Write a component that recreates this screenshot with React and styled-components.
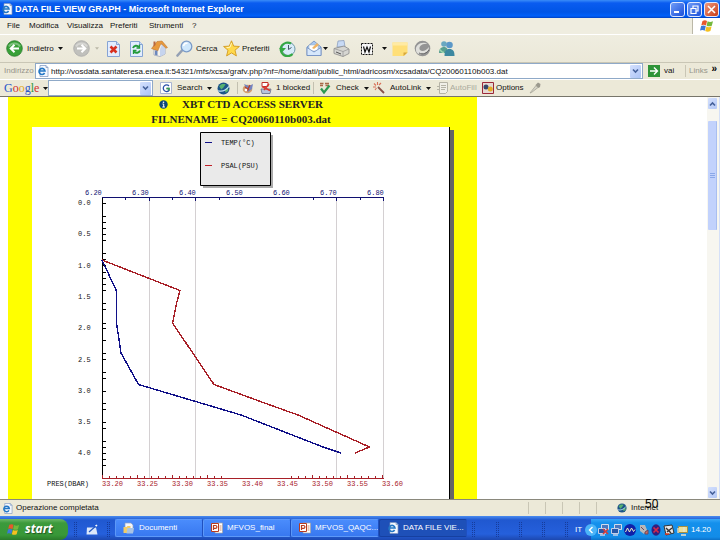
import React from "react";
import styled, { createGlobalStyle } from "styled-components";

const GlobalStyle = createGlobalStyle`
  * { box-sizing: border-box; }
  body { margin: 0; background: #fff; }
  button, input { font: inherit; color: inherit; }
  svg { display: block; flex: none; }
`;

const Page = styled.div`
  display: flex;
  flex-direction: column;
  height: 100vh;
  overflow: hidden;
  font: 8px/12px "Liberation Sans", Arial, sans-serif;
  color: #111;
  white-space: nowrap;
`;

const TitleBar = styled.header`
  flex: none;
  display: flex;
  align-items: center;
  gap: 2px;
  height: 18px;
  padding: 0 1px;
  background: linear-gradient(#3a8cf8 0, #0a5cf0 3px, #0055e6 12px, #0060fa 16px, #0040c0 18px);
`;

const Title = styled.h1`
  flex: 1;
  margin: 0;
  font: 700 9px/16px "Liberation Sans", sans-serif;
  color: #fff;
`;

const WindowButton = styled.button`
  display: grid;
  place-items: center;
  width: 15px;
  height: 15px;
  padding: 0;
  border: 1px solid #dfe8ff;
  border-radius: 3px;
  background: ${(p) => (p.$close ? "linear-gradient(135deg, #f0987c, #c83c18)" : "linear-gradient(135deg, #6f9cf8, #1c50d8)")};
`;

const MenuBar = styled.nav`
  flex: none;
  display: grid;
  grid-template-columns: 22px 38px 43px 39px 43px 1fr 28px;
  align-items: center;
  height: 17px;
  padding-left: 7px;
  background: #efede0;
  border-bottom: 1px solid #fff;
`;

const PlainButton = styled.button`
  display: flex;
  align-items: center;
  gap: ${(p) => p.$gap ?? 3}px;
  min-width: 0;
  height: 16px;
  padding: 0;
  border: 0;
  background: none;
  text-align: left;
  white-space: nowrap;
  color: ${(p) => (p.$dim ? "#aaa99c" : "#111")};
`;

const FlagCell = styled.div`
  display: grid;
  place-items: center;
  height: 16px;
  border-left: 1px solid #bbb8a8;
  background: #fff;
`;

const ToolBar = styled.div`
  flex: none;
  display: grid;
  grid-template-columns: 67px 34px 23px 21px 25px 47px 56px 27px 27px 28px 31px 22px 24px 1fr;
  align-items: center;
  height: 28px;
  padding-left: 6px;
  background: linear-gradient(#efede0, #ebe8d8);
  border-bottom: 1px solid #c9c6b5;
`;

const AddressBar = styled.form`
  flex: none;
  display: flex;
  align-items: center;
  height: 17px;
  padding-left: 4px;
  background: #ece9d8;
  border-bottom: 1px solid #fff;
`;

const AddressLabel = styled.label`
  width: 31px;
  color: #96948a;
`;

const Combo = styled.div`
  flex: ${(p) => (p.$width ? `0 0 ${p.$width}px` : "1")};
  display: flex;
  align-items: center;
  gap: 2px;
  width: ${(p) => (p.$width ? `${p.$width}px` : "auto")};
  height: 16px;
  padding: 0 1px;
  border: 1px solid #8fa9c8;
  background: #fff;
`;

const ComboInput = styled.input`
  flex: 1;
  min-width: 0;
  height: 14px;
  padding: 0;
  border: 0;
  outline: 0;
  background: none;
`;

const ComboButton = styled.button`
  display: grid;
  place-items: center;
  width: 11px;
  height: 13px;
  padding: 0;
  border: 0;
  border-radius: 1px;
  background: linear-gradient(135deg, #d4e0fd, #acc4f6);
`;

const GoArea = styled.div`
  display: flex;
  align-items: center;
  width: 42px;
  padding-left: 5px;
`;

const LinksArea = styled.div`
  display: flex;
  justify-content: space-between;
  width: 35px;
  padding: 0 3px;
  border-left: 1px solid #c9c6b5;
  color: #96948a;
`;

const Chevrons = styled.span`
  color: #000;
  font-weight: 700;
  font-size: 10px;
  line-height: 8px;
`;

const GoogleBar = styled.div`
  flex: none;
  display: grid;
  grid-template-columns: 44px 112px 57px 25px 18px 53px 6px 54px 64px 45px 47px 1fr;
  align-items: center;
  height: 17px;
  padding-left: 4px;
  background: #ece9d8;
  border-bottom: 1px solid #77756a;
`;

const GoogleLogo = styled.span`
  font: 12px/14px "Liberation Serif", serif;
`;

const Letter = styled.span`
  color: ${(p) => p.$color};
`;

const Divider = styled.span`
  width: 1px;
  height: 12px;
  background: #c3c0b0;
`;

const Viewport = styled.main`
  flex: 1;
  min-height: 0;
  display: flex;
  overflow: hidden;
  padding-left: 8px;
  background: #fff;
  border-bottom: 1px solid #8a887c;
`;

const Document = styled.article`
  flex: 0 0 469px;
  display: flex;
  flex-direction: column;
  padding: 0 27px 0 24px;
  overflow: hidden;
  background: #ff0;
`;

const Heading = styled.h2`
  display: flex;
  align-items: center;
  justify-content: center;
  gap: 14px;
  margin: 0;
  font: 700 11px/15px "Liberation Serif", serif;
  color: #222;
`;

const Sheet = styled.section`
  flex: 1;
  min-height: 0;
  border-right: 1px solid #000;
  background: #fff;
  box-shadow: 4px 3px 0 #666;
`;

const ChartText = styled.text`
  font: 7px "Liberation Mono", monospace;
  fill: ${(p) => p.$color ?? "#111"};
`;

const Blank = styled.div`
  flex: 1;
`;

const ScrollTrack = styled.div`
  display: flex;
  flex-direction: column;
  width: 13px;
  padding: 1px 2px 1px 1px;
  background: #f7f6f0;
  border-right: 1px solid #d5e0f8;
`;

const ScrollButton = styled.button`
  display: grid;
  place-items: center;
  height: 11px;
  padding: 0;
  border: 0;
  border-radius: 1px;
  background: linear-gradient(135deg, #d4e0fd, #b4c8f6);
`;

const ScrollThumb = styled.div`
  display: grid;
  place-items: center;
  height: 109px;
  margin-top: 12px;
  border-radius: 1px;
  background: #c2d2fc;
  border-right: 1px solid #a8bef0;
`;

const ScrollGap = styled.div`
  flex: 1;
`;

const StatusBar = styled.footer`
  flex: none;
  display: flex;
  align-items: center;
  height: 16px;
  padding-left: 2px;
  gap: 3px;
  background: #ece9d8;
`;

const StatusText = styled.span`
  flex: 1;
`;

const StatusCell = styled.span`
  width: 14px;
  height: 12px;
  border-left: 1px solid #c9c6b5;
`;

const Zone = styled.span`
  position: relative;
  display: flex;
  align-items: center;
  gap: 4px;
  width: 107px;
  padding-left: 4px;
`;

const SlideNumber = styled.span`
  position: absolute;
  left: 32px;
  top: -4px;
  font: 12px/12px "Liberation Sans", sans-serif;
  color: #000;
`;

const TaskBar = styled.nav`
  flex: none;
  display: flex;
  align-items: stretch;
  height: 24px;
  padding-top: 3px;
  color: #fff;
  background: linear-gradient(#4a8cf0 0, #2058d0 4px, #2560dc 18px, #1c48b0 24px);
`;

const StartButton = styled.button`
  display: flex;
  align-items: center;
  gap: 5px;
  width: 68px;
  padding: 0 0 1px 7px;
  border: 0;
  border-radius: 0 8px 8px 0;
  background: linear-gradient(#6cb868 0, #3c9a3c 4px, #389838 16px, #2a7a2a 21px);
  font: italic 700 12px/18px "Open Sans", sans-serif;
  color: #fff;
  text-shadow: 1px 1px 1px #225522;
`;

const QuickLaunch = styled.div`
  display: flex;
  align-items: center;
  justify-content: space-between;
  width: 47px;
  padding: 0 5px 0 6px;
`;

const Grip = styled.span`
  width: 3px;
  height: 15px;
  border-left: 1px dotted #163c9c;
  border-right: 1px dotted #163c9c;
`;

const TaskButton = styled.button`
  flex: 0 1 88px;
  display: flex;
  align-items: center;
  gap: 4px;
  min-width: 0;
  height: 18px;
  padding: 0 0 0 7px;
  border: 1px solid ${(p) => (p.$active ? "#1640a0" : "#5c98f8")};
  border-right-color: #1f50c0;
  border-radius: 2px;
  background: ${(p) => (p.$active ? "#1e50b8" : "linear-gradient(#4a8cfc, #3878f0)")};
  color: #fff;
  overflow: hidden;
  white-space: nowrap;
`;

const GripArea = styled.div`
  flex: 1;
  display: flex;
  align-items: center;
  justify-content: flex-end;
  gap: 20px;
  padding-right: 7px;
`;

const FirstGrip = styled(Grip)`
  margin-right: auto;
  margin-left: 5px;
`;

const Language = styled.span`
  align-self: center;
  width: 10px;
`;

const CollapseButton = styled.button`
  align-self: center;
  display: grid;
  place-items: center;
  width: 12px;
  height: 12px;
  margin-right: -6px;
  padding: 0;
  border: 0;
  border-radius: 50%;
  background: #4cb4f8;
  z-index: 1;
`;

const Tray = styled.div`
  display: flex;
  align-items: center;
  gap: 2px;
  width: 129px;
  padding: 0 9px 0 7px;
  background: linear-gradient(#38a8f8, #1490ec 4px, #128ce8 18px, #0c70c8);
`;

const Clock = styled.time`
  margin-left: auto;
`;

const Caret = () => (
  <svg width="5" height="3" viewBox="0 0 5 3"><path d="M0 0h5L2.500 3z" fill="#111" /></svg>
);

const DownMark = ({ up }) => (
  <svg width="7" height="6" viewBox="0 0 7 6">
    <path d={up ? "M1 4.500 3.500 2 6 4.500" : "M1 1.500 3.500 4 6 1.500"} fill="none" stroke="#45619a" strokeWidth="1.600" />
  </svg>
);

const IePage = ({ size = 12 }) => (
  <svg width={size} height={size} viewBox="0 0 12 12">
    <path d="M3 .5h6l2 2v9H3z" fill="#f4f8ff" stroke="#7b94bd" strokeWidth=".7" />
    <path d="M9 .5v2h2" fill="none" stroke="#7b94bd" strokeWidth=".7" />
    <path d="M7.600 8a3 3 0 1 1 .4-2H2.500" fill="none" stroke="#2377c5" strokeWidth="1.600" />
  </svg>
);

const Flag = ({ size = 14 }) => (
  <svg width={size} height={size} viewBox="0 0 14 14">
    <path d="M2.500 2c2-1 3.200-.8 4.500 0L6 6.500C4.500 5.600 3 5.600 1.300 6.300z" fill="#e8582c" />
    <path d="M7.600 2.200c1.700 1 3.200.9 5.400 0l-1.200 4.500c-2 .9-3.600.8-5.200 0z" fill="#74b83c" />
    <path d="M1.100 7c1.900-.8 3.200-.7 4.700.2L4.700 11.800C3.200 10.900 1.800 10.900 0 11.600z" fill="#3c78d8" />
    <path d="M6.400 7.500c1.700.9 3.200.9 5.200 0l-1.200 4.500c-2 1-3.500.9-5.200 0z" fill="#f4c020" />
  </svg>
);

const RoundArrow = ({ forward }) => (
  <svg width="17" height="17" viewBox="0 0 17 17">
    <circle cx="8.500" cy="8.500" r="7.800" fill={forward ? "#c0c0bc" : "#38a038"} stroke={forward ? "#aaa" : "#2a7c2c"} strokeWidth=".8" />
    <path d="M3 6.500a6 5 0 0 1 11 0" fill="none" stroke="#fff" strokeOpacity=".35" strokeWidth="2" />
    <path d={forward ? "M4 8.500h8M8.500 4.800l3.800 3.700-3.800 3.700" : "M13 8.500H5M8.500 4.800 4.700 8.500l3.800 3.700"} fill="none" stroke="#fff" strokeWidth="2" />
  </svg>
);

const PageIcon = ({ refresh }) => (
  <svg width="13" height="16" viewBox="0 0 13 16">
    <path d="M.5.500h9l3 3v12H.5z" fill="#e2edff" stroke="#86a4d4" />
    <path d="M9.500.500v3h3" fill="#cddcf6" stroke="#86a4d4" />
    {refresh ? (
      <g fill="none" stroke="#229a3a" strokeWidth="2">
        <path d="M3 7c1-2.500 4-3 6-1M10 9.500c-1 2.500-4 3-6 1" />
        <path d="M9.500 3.500v3.500H6.500M3.500 13V9.500h3" strokeWidth="1.300" />
      </g>
    ) : (
      <path d="m3.500 5.500 6 6m0-6-6 6" stroke="#d83020" strokeWidth="2.600" />
    )}
  </svg>
);

const HomeIcon = () => (
  <svg width="17" height="17" viewBox="0 0 17 17">
    <path d="M3 8v7l6 1.500 5-2.500V7L9 3z" fill="#f8f4ec" stroke="#8b96b4" strokeWidth=".7" />
    <path d="m9 16.500 5-2.500V7l-3-2.500L9 9z" fill="#c6d4ee" />
    <path d="M.5 8.500 6 1.500l5-.5 5.500 6.500-1.500.800-5-4.800-3.300 7.500z" fill="#e89a3c" stroke="#b86c28" strokeWidth=".5" />
    <path d="M4 10.500h2.500v5L4 14.800z" fill="#6c88bc" />
    <path d="M2.500 1.500h2V5l-2 2z" fill="#b86840" />
  </svg>
);

const Magnifier = () => (
  <svg width="17" height="17" viewBox="0 0 17 17">
    <path d="M1.500 15.500 6 10.500" stroke="#94a0b4" strokeWidth="2.600" strokeLinecap="round" />
    <circle cx="10.500" cy="6.500" r="5.300" fill="#cfe8fc" stroke="#7c9cc8" strokeWidth="1.300" />
    <path d="M7.500 6a3.500 3.500 0 0 1 4-2.700" fill="none" stroke="#fff" strokeWidth="1.500" />
  </svg>
);

const Star = () => (
  <svg width="17" height="17" viewBox="0 0 17 17">
    <path d="m8.500.800 2.200 5.300 5.700.400-4.400 3.700 1.400 5.700-4.900-3-4.900 3L5 10.200.600 6.500l5.700-.4z" fill="#ffd94c" stroke="#d39a20" strokeWidth=".9" />
    <path d="M8.500 3 7 7.200l-3.500.500" fill="none" stroke="#fff6c0" />
  </svg>
);

const HistoryIcon = () => (
  <svg width="17" height="16" viewBox="0 0 17 16">
    <circle cx="9.500" cy="8" r="6.500" fill="#d8ecf8" stroke="#6c98a8" />
    <path d="M9.500 4v4.500l3-2" fill="none" stroke="#456" />
    <path d="M13.500 13A6.800 6.800 0 1 1 12 2.500" fill="none" stroke="#35a845" strokeWidth="2.200" />
    <path d="m0 7 3.500 4L7 7z" fill="#35a845" />
  </svg>
);

const MailIcon = () => (
  <svg width="16" height="17" viewBox="0 0 16 17">
    <path d="M1 7 8 1l7 6v8.500H1z" fill="#a8c8f0" stroke="#6c8cc0" strokeWidth=".8" />
    <path d="M3 5h9v6H3z" fill="#fff" stroke="#9ab" strokeWidth=".5" />
    <path d="M1 7.500 8 12l7-4.500v8H1z" fill="#d6e7fb" stroke="#6c8cc0" strokeWidth=".8" />
    <path d="m6 8 5-5 2 2-5 4z" fill="#f0b464" />
  </svg>
);

const Printer = () => (
  <svg width="17" height="17" viewBox="0 0 17 17">
    <path d="m4 7 1-6 6-.5 1 6.500z" fill="#c8daf5" stroke="#8297b9" strokeWidth=".7" />
    <path d="m1 8.500 10-2.500 5 3v4.500l-6 3-9-3z" fill="#d6d6d2" stroke="#888" strokeWidth=".8" />
    <path d="m1 8.500 9 3v5M10 11.500 16 9" fill="none" stroke="#999" strokeWidth=".8" />
    <path d="m3 12 5 2" stroke="#555" />
  </svg>
);

const WordIcon = () => (
  <svg width="12" height="12" viewBox="0 0 12 12">
    <path d="M.5.500h11v11H.5z" fill="#f8f8f8" stroke="#111" strokeDasharray="2 1" />
    <path d="M2.500 3.500 4 9l2-5 2 5 1.500-5.500" fill="none" stroke="#111" strokeWidth="1.200" />
  </svg>
);

const NoteIcon = () => (
  <svg width="16" height="16" viewBox="0 0 16 16">
    <path d="M.5 1.500h15v10L12 15H.5z" fill="#ffdf78" />
    <path d="M.5 1.500h15v3H.5z" fill="#ffeaa4" />
    <path d="M15.500 11.500h-4V15z" fill="#d8a83c" />
  </svg>
);

const SwirlIcon = () => (
  <svg width="17" height="17" viewBox="0 0 17 17">
    <circle cx="8.500" cy="8.500" r="7.800" fill="#949494" />
    <path d="M2 10C1 5 8 .5 14 4 8 3 4 7 6 10c2 2 6 1 9-3 0 5-6 8-10 7-2-.5-3-2-3-4z" fill="#e0e0dc" />
    <path d="M5 13c4 2 8 0 10-3" fill="none" stroke="#666" />
  </svg>
);

const PeopleIcon = () => (
  <svg width="17" height="17" viewBox="0 0 17 17">
    <circle cx="6" cy="4" r="2.800" fill="#6aa8c0" />
    <path d="M1 13c0-4 2-6 5-6s4 2 4 6z" fill="#5aa090" />
    <circle cx="11.500" cy="5" r="3.300" fill="#5c98c8" />
    <path d="M6.500 16C6.500 11 8 9 11.500 9S16.500 11 16.500 16z" fill="#3c88a0" />
    <path d="M2 9.500c1 2 2 3 4 3" fill="none" stroke="#a0d8b0" strokeWidth="1.500" />
  </svg>
);

const GoIcon = () => (
  <svg width="12" height="12" viewBox="0 0 12 12">
    <path d="M0 0h12v12H0z" fill="#2f9438" />
    <path d="M2 6h7M6 2.500 9.500 6 6 9.500" fill="none" stroke="#fff" strokeWidth="1.400" />
  </svg>
);

const GIcon = () => (
  <svg width="12" height="12" viewBox="0 0 12 12">
    <path d="M.5.500h11v11H.5z" fill="#fff" stroke="#a9b4d2" />
    <path d="M9 4A3.300 3.300 0 1 0 9 8.500V6.500H6.500" fill="none" stroke="#2a50a8" strokeWidth="1.300" />
    <path d="M9 8.500V6.500H6.500" fill="none" stroke="#38a048" strokeWidth="1.300" />
  </svg>
);

const Globe = ({ size = 12 }) => (
  <svg width={size} height={size} viewBox="0 0 12 12">
    <circle cx="6" cy="6" r="5.500" fill="#1c5488" />
    <path d="M2 4c2-3 4-2 6-2L6 5 4 7zM7 7l3-2 .5 3L8 10z" fill="#56b070" />
    <path d="M1 8c3 1 7 0 10-4" fill="none" stroke="#bce0f4" />
  </svg>
);

const NewsIcon = () => (
  <svg width="12" height="12" viewBox="0 0 12 12">
    <ellipse cx="5.500" cy="7" rx="4.800" ry="4.300" fill="#d4a070" />
    <path d="m2 2 5 2 4-2-1 5-4 3z" fill="#7484c0" />
    <path d="m3 5 4 3M8 3 5 9" stroke="#b8402c" strokeWidth="1.300" />
    <circle cx="4" cy="8" r="1.300" fill="#fff" />
  </svg>
);

const BlockedIcon = () => (
  <svg width="12" height="12" viewBox="0 0 12 12">
    <path d="M1 7h10l-1 4.500H2z" fill="#b8c4dc" stroke="#56607c" strokeWidth=".7" />
    <path d="M2 .5h6v4H2z" fill="#fff" stroke="#c03028" />
    <path d="m2 4.500 8 4M9 2 4 8" stroke="#d83830" strokeWidth="1.500" />
  </svg>
);

const SpellIcon = () => (
  <svg width="12" height="12" viewBox="0 0 12 12">
    <path d="M1 1.500h3.500M6 1.500h4M1 3.500h3M6.500 3.500H10" stroke="#a86848" strokeWidth="1.300" />
    <path d="m2 6.500 3 4L10.500 3.500" fill="none" stroke="#2c9850" strokeWidth="2.200" />
  </svg>
);

const WandIcon = () => (
  <svg width="12" height="12" viewBox="0 0 12 12">
    <path d="m5 5 6 6" stroke="#885048" strokeWidth="1.800" />
    <path d="M4.500 0v3M1 1.500l2 2M0 5h3M8 1 6 3M2 8l1.500-2" stroke="#d87058" strokeWidth="1.100" />
  </svg>
);

const FormIcon = () => (
  <svg width="11" height="12" viewBox="0 0 11 12">
    <path d="M2.500.500h8v9l-2 2h-6z" fill="#f0efe8" stroke="#b5b3a6" />
    <path d="M4 3.500h5M4 5.500h5M4 7.500h4M0 4.500h3M0 7.500h3" stroke="#b5b3a6" />
  </svg>
);

const OptionsIcon = () => (
  <svg width="12" height="12" viewBox="0 0 12 12">
    <path d="M.5.500h11v11H.5z" fill="#e6d9d2" stroke="#9c2838" />
    <circle cx="4" cy="5" r="2.500" fill="#384868" />
    <circle cx="8.300" cy="7" r="2.500" fill="#e4ac28" />
  </svg>
);

const PenIcon = () => (
  <svg width="12" height="12" viewBox="0 0 12 12">
    <path d="M1 11 7 3.500 9 5.500 2.500 10.500z" fill="#d6d4c8" stroke="#a6a498" strokeWidth=".8" />
    <path d="M6.500 3 9 .5l2.500 1.500L11 5 9.500 6z" fill="#9b998e" />
  </svg>
);

const InfoIcon = () => (
  <svg width="9" height="9" viewBox="0 0 9 9">
    <circle cx="4.500" cy="4.500" r="4.200" fill="#104878" />
    <path d="M3.500 4h1.200v3M3.300 7h2.600" fill="none" stroke="#fff" />
    <circle cx="4.500" cy="2.200" r=".8" fill="#fff" />
  </svg>
);

const FolderIcon = () => (
  <svg width="12" height="12" viewBox="0 0 12 12">
    <path d="M2 1h6l2 2v7H2z" fill="#f4f6fc" stroke="#8ca0c0" strokeWidth=".7" />
    <path d="M.5 5h3l1-1h3v7h-7z" fill="#f0cc68" />
    <path d="M4.500 6h6.500l-1 5.500H3.500z" fill="#a9c4e4" />
  </svg>
);

const SlidesIcon = () => (
  <svg width="12" height="12" viewBox="0 0 12 12">
    <path d="M4 1h7.500v10H4z" fill="#fff" stroke="#a0a0a0" strokeWidth=".7" />
    <path d="M.5 1.500h7v8h-7z" fill="#fff" stroke="#b83c20" />
    <path d="M2.500 8V3.500H4.500a1.300 1.300 0 0 1 0 2.800h-2" fill="none" stroke="#b83c20" strokeWidth="1.200" />
    <path d="M8.500 4h2M8.500 6h2M8.500 8h2" stroke="#c86c40" strokeWidth=".8" />
  </svg>
);

const DesktopIcon = () => (
  <svg width="12" height="12" viewBox="0 0 12 12">
    <path d="M1 3.500h9l1.500 7H.5z" fill="#dce8fa" />
    <path d="m3 8 7.500-6.500" stroke="#2458c0" strokeWidth="1.200" />
    <path d="m9 1.500 1.500-1 1 1-1.200 1.200z" fill="#fff" />
  </svg>
);

const TrayPc = ({ off }) => (
  <svg width="11" height="12" viewBox="0 0 11 12">
    <path d="M3.500.500h7v5h-7z" fill="#4878c0" stroke="#d0dcec" />
    <path d="M.5 4.500h7v5h-7z" fill="#2858a8" stroke="#c4d0e8" />
    <path d="M2 11h5" stroke="#c4d0e8" strokeWidth="1.500" />
    {off && <path d="m5 5 5 5m0-5-5 5" stroke="#d83c38" strokeWidth="1.500" />}
  </svg>
);

const TrayWave = () => (
  <svg width="12" height="12" viewBox="0 0 12 12">
    <circle cx="6" cy="6" r="6" fill="#1020a8" />
    <path d="m1.500 8 2-4 2 4 2-4 2 3.500 1.500-2" fill="none" stroke="#f0f0c0" />
  </svg>
);

const TrayCup = () => (
  <svg width="11" height="12" viewBox="0 0 11 12">
    <path d="M2 1h5l2 5-3 4-4-3z" fill="#b8b8b8" />
    <path d="m3 3 3 3M7 8l3-2v4H7z" stroke="#70485c" fill="#d07060" />
  </svg>
);

const TrayX = () => (
  <svg width="10" height="12" viewBox="0 0 10 12">
    <ellipse cx="5" cy="6" rx="4.500" ry="5.800" fill="#302080" />
    <path d="m2.500 3.500 5 5m0-5-5 5" stroke="#d82848" strokeWidth="1.700" />
  </svg>
);

const TrayCard = () => (
  <svg width="12" height="12" viewBox="0 0 12 12">
    <path d="m1 2 8-1 2 8-8 2z" fill="#e8e8e8" stroke="#333" />
    <path d="m3 4 5 5M4 8l5-4" stroke="#333" strokeWidth="1.400" />
    <path d="M2 10h4" stroke="#d83820" strokeWidth="1.500" />
  </svg>
);

const TrayBox = () => (
  <svg width="11" height="12" viewBox="0 0 11 12">
    <path d="M1.500 2.500h9v6h-9z" fill="#ece09c" stroke="#a89040" />
    <path d="M4 11h5M1 4v5M7 3v5" stroke="#e8e4d0" strokeWidth="1.300" />
  </svg>
);

const DEPTH_TICKS = [203, 216, 222, 228, 234, 240, 253, 259, 265, 272, 278, 284, 290, 303, 309, 323, 328, 340, 353, 359, 372, 378, 391, 403, 409, 422, 428, 441, 447, 453, 459, 465];
const TEMPS = ["6.20", "6.30", "6.40", "6.50", "6.60", "6.70", "6.80"];
const SALTS = ["33.20", "33.25", "33.30", "33.35", "33.40", "33.45", "33.50", "33.55", "33.60"];
const DEPTHS = ["0.0", "0.5", "1.0", "1.5", "2.0", "2.5", "3.0", "3.5", "4.0"];
const SALT_TICKS = Array.from({ length: 41 }, (_, i) => i).filter((i) => i < 18 || i > 26);
const NAVY = "#101070";
const BLUE = "#101088";
const RED = "#a82028";

const Chart = () => (
  <svg width="416" height="372" viewBox="32 127 416 372" role="img" aria-label="Temperature and salinity against pressure">
    <path d="M203 135h70v53h-70z" fill="#aaa" />
    <path d="M200.500 132.500h70v53h-70z" fill="#eaeaea" stroke="#000" />
    <path d="M205 142.500h7" stroke={BLUE} />
    <path d="M205 165.500h7" stroke="#c02028" />
    <ChartText x="221" y="145">TEMP(°C)</ChartText>
    <ChartText x="221" y="168">PSAL(PSU)</ChartText>
    <path d="M149.500 198v280M195.500 198v280M336.500 198v280M383.500 198v280" stroke="#d4d0d2" />
    <path d="M102.500 197v282" stroke="#000" />
    {DEPTH_TICKS.map((y) => <path key={y} d={`M103 ${y + 0.5}h3`} stroke="#000" />)}
    <path d="M102 197.500h282M125.500 198v2M149.500 198v3M172.500 198v2M195.500 198v3M219.500 198v2M313.500 198v2M336.500 198v3M360.500 198v2M383.500 198v3" fill="none" stroke={NAVY} />
    <path d="M102 478.500h282" stroke={RED} />
    {SALT_TICKS.map((i) => <path key={i} d={`M${102.5 + i * 7} 478v${i % 5 === 0 ? -3 : -2}`} stroke={RED} />)}
    {TEMPS.map((t, i) => <ChartText key={t} $color={NAVY} x={85 + i * 47} y="195">{t}</ChartText>)}
    {SALTS.map((t, i) => <ChartText key={t} $color={RED} x={102 + i * 35} y="486">{t}</ChartText>)}
    {DEPTHS.map((t, i) => <ChartText key={t} x="78" y={205 + Math.round(i * 31.3)}>{t}</ChartText>)}
    <ChartText x="47" y="486">PRES(DBAR)</ChartText>
    <g fill="none" strokeWidth="1.400" shapeRendering="crispEdges">
      <path d="m102 260 78 30.500-3 11-4.500 21.500L214 384.500l56 20.500 28 10 71.500 32-14.500 6" stroke={RED} />
      <path d="m102 260 14.500 31v32l4.500 30 17.500 31.500L241 415l82 32 18 6" stroke={BLUE} />
    </g>
  </svg>
);

const GOOGLE = [["G", "#2a56c8"], ["o", "#d03030"], ["o", "#e0a820"], ["g", "#2a56c8"], ["l", "#2c9840"], ["e", "#d03030"]];

export default function App() {
  return (
    <Page>
      <GlobalStyle />
      <TitleBar>
        <IePage />
        <Title>DATA FILE VIEW GRAPH - Microsoft Internet Explorer</Title>
        <WindowButton aria-label="Minimize"><svg width="9" height="9" viewBox="0 0 9 9"><path d="M1 7h5" stroke="#fff" strokeWidth="2" /></svg></WindowButton>
        <WindowButton aria-label="Restore"><svg width="9" height="9" viewBox="0 0 9 9"><path d="M3 3V1h5v5H6M1 3.500h5v5H1z" fill="none" stroke="#fff" strokeWidth="1.200" /></svg></WindowButton>
        <WindowButton $close aria-label="Close"><svg width="9" height="9" viewBox="0 0 9 9"><path d="m1 1 7 7m0-7L1 8" stroke="#fff" strokeWidth="1.600" /></svg></WindowButton>
      </TitleBar>
      <MenuBar>
        {["File", "Modifica", "Visualizza", "Preferiti", "Strumenti", "?"].map((m) => <PlainButton key={m}>{m}</PlainButton>)}
        <FlagCell><Flag /></FlagCell>
      </MenuBar>
      <ToolBar>
        <PlainButton $gap={4}><RoundArrow />Indietro<Caret /></PlainButton>
        <PlainButton $gap={5} aria-label="Avanti"><RoundArrow forward /><svg width="4" height="3" viewBox="0 0 5 3"><path d="M0 0h5L2.500 3z" fill="#bbb8a8" /></svg></PlainButton>
        <PlainButton aria-label="Termina"><PageIcon /></PlainButton>
        <PlainButton aria-label="Aggiorna"><PageIcon refresh /></PlainButton>
        <PlainButton aria-label="Pagina iniziale"><HomeIcon /></PlainButton>
        <PlainButton><Magnifier />Cerca</PlainButton>
        <PlainButton $gap={2}><Star />Preferiti</PlainButton>
        <PlainButton aria-label="Cronologia"><HistoryIcon /></PlainButton>
        <PlainButton $gap={1} aria-label="Posta"><MailIcon /><Caret /></PlainButton>
        <PlainButton aria-label="Stampa"><Printer /></PlainButton>
        <PlainButton $gap={9} aria-label="Modifica con Word"><WordIcon /><Caret /></PlainButton>
        <PlainButton aria-label="Discussione"><NoteIcon /></PlainButton>
        <PlainButton aria-label="Ricerche"><SwirlIcon /></PlainButton>
        <PlainButton aria-label="Messenger"><PeopleIcon /></PlainButton>
      </ToolBar>
      <AddressBar onSubmit={(e) => e.preventDefault()}>
        <AddressLabel htmlFor="address">Indirizzo</AddressLabel>
        <Combo>
          <IePage />
          <ComboInput id="address" defaultValue="http://vosdata.santateresa.enea.it:54321/mfs/xcsa/grafv.php?nf=/home/dati/public_html/adricosm/xcsadata/CQ20060110b003.dat" />
          <ComboButton type="button" aria-label="Indirizzi recenti"><DownMark /></ComboButton>
        </Combo>
        <GoArea><PlainButton $gap={4}><GoIcon />vai</PlainButton></GoArea>
        <LinksArea>Links <Chevrons>»</Chevrons></LinksArea>
      </AddressBar>
      <GoogleBar>
        <PlainButton $gap={4}><GoogleLogo>{GOOGLE.map(([c, color], i) => <Letter key={i} $color={color}>{c}</Letter>)}</GoogleLogo><Caret /></PlainButton>
        <Combo $width={105}>
          <ComboInput aria-label="Google" />
          <ComboButton aria-label="Ricerche recenti"><DownMark /></ComboButton>
        </Combo>
        <PlainButton $gap={5}><GIcon />Search<Caret /></PlainButton>
        <PlainButton $gap={7} aria-label="Web"><Globe size={13} /><Divider /></PlainButton>
        <PlainButton aria-label="News"><NewsIcon /></PlainButton>
        <PlainButton $gap={4}><BlockedIcon />1 blocked</PlainButton>
        <Divider />
        <PlainButton $gap={5}><SpellIcon />Check<Caret /></PlainButton>
        <PlainButton $gap={5}><WandIcon />AutoLink<Caret /></PlainButton>
        <PlainButton $dim $gap={2}><FormIcon />AutoFill</PlainButton>
        <PlainButton $gap={2}><OptionsIcon />Options</PlainButton>
        <PlainButton aria-label="Evidenzia"><PenIcon /></PlainButton>
      </GoogleBar>
      <Viewport>
        <Document>
          <Heading><InfoIcon />XBT CTD ACCESS SERVER</Heading>
          <Heading>FILNENAME = CQ20060110b003.dat</Heading>
          <Sheet><Chart /></Sheet>
        </Document>
        <Blank />
        <ScrollTrack>
          <ScrollButton aria-label="Su"><DownMark up /></ScrollButton>
          <ScrollThumb><svg width="5" height="5" viewBox="0 0 5 5"><path d="M0 .5h5M0 2.500h5M0 4.500h5" stroke="#8aa8e8" /></svg></ScrollThumb>
          <ScrollGap />
          <ScrollButton aria-label="Giù"><DownMark /></ScrollButton>
        </ScrollTrack>
      </Viewport>
      <StatusBar>
        <IePage size={11} />
        <StatusText>Operazione completata</StatusText>
        <StatusCell /><StatusCell /><StatusCell /><StatusCell /><StatusCell />
        <Zone><Globe size={10} />Internet<SlideNumber>50</SlideNumber></Zone>
      </StatusBar>
      <TaskBar>
        <StartButton><Flag size={13} />start</StartButton>
        <QuickLaunch><Grip /><DesktopIcon /><Grip /></QuickLaunch>
        <TaskButton><FolderIcon />Documenti</TaskButton>
        <TaskButton><SlidesIcon />MFVOS_final</TaskButton>
        <TaskButton><SlidesIcon />MFVOS_QAQC...</TaskButton>
        <TaskButton $active><IePage />DATA FILE VIE...</TaskButton>
        <GripArea><FirstGrip /><Grip /><Grip /><Grip /><Grip /></GripArea>
        <Language>IT</Language>
        <CollapseButton aria-label="Nascondi icone"><svg width="6" height="8" viewBox="0 0 6 8"><path d="M4.500 1 1.500 4l3 3" fill="none" stroke="#fff" strokeWidth="1.400" /></svg></CollapseButton>
        <Tray><TrayPc off /><TrayPc /><TrayWave /><TrayCup /><TrayX /><TrayCard /><TrayBox /><Clock>14.20</Clock></Tray>
      </TaskBar>
    </Page>
  );
}
